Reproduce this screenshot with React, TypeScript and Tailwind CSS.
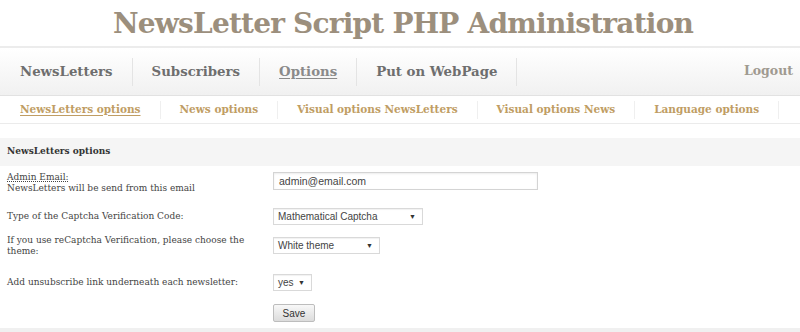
import React from "react";

const MAIN_NAV = ["NewsLetters", "Subscribers", "Options", "Put on WebPage"];
const SUB_NAV = [
  "NewsLetters options",
  "News options",
  "Visual options NewsLetters",
  "Visual options News",
  "Language options",
];

function FakeSelect({ value, width }: { value: string; width: string }) {
  return (
    <div
      className={`${width} h-[17px] flex items-center justify-between pl-[4px] pr-[6px] border border-[#d9d9d9] bg-white text-[10px] text-[#444] font-['Liberation_Sans',sans-serif] shadow-[inset_0_1px_1px_rgba(0,0,0,0.06)]`}
    >
      <span>{value}</span>
      <span className="text-[7px] text-[#333]">▼</span>
    </div>
  );
}

export default function App() {
  return (
    <div className="w-[800px] h-[332px] overflow-hidden bg-white font-['DejaVu_Serif',serif]">
      {/* Title */}
      <h1 className="h-[46px] flex items-center justify-center pl-[6px] text-[28px] font-bold text-[#9c8f7d] tracking-[-0.8px] pt-[1px]">
        NewsLetter Script PHP Administration
      </h1>

      {/* Main nav */}
      <div className="h-[50px] border-t-2 border-b border-t-[#ececec] border-b-[#e2e2e2] bg-gradient-to-b from-white to-[#f1f1f1] flex items-center pl-[20px] pr-[7px] whitespace-nowrap">
        {MAIN_NAV.map((item) => (
          <React.Fragment key={item}>
            <span
              className={`text-[13.3px] font-bold ${
                item === "Options"
                  ? "underline underline-offset-2 decoration-1 text-[#8a8a8a]"
                  : "text-[#6e6e6e]"
              }`}
            >
              {item}
            </span>
            <span className="w-px h-[28px] bg-[#e4e4e4] mx-[19px]" />
          </React.Fragment>
        ))}
        <span className="ml-auto text-[12.5px] font-bold text-[#a09a90]">Logout</span>
      </div>

      {/* Sub nav */}
      <div className="h-[28px] border-b border-[#ebebeb] flex items-center pl-[20px] whitespace-nowrap">
        {SUB_NAV.map((item, i) => (
          <React.Fragment key={item}>
            <span
              className={`text-[10.5px] font-bold text-[#c09d63] ${
                i === 0 ? "underline underline-offset-2 decoration-1" : ""
              }`}
            >
              {item}
            </span>
            <span className="w-px h-[18px] bg-[#efefef] mx-[19px] shrink-0" />
          </React.Fragment>
        ))}
      </div>

      {/* Section header */}
      <div className="mt-[14px] h-[28px] bg-[#f5f5f5] flex items-center px-[7px] text-[9px] font-bold text-[#333]">
        NewsLetters options
      </div>

      {/* Form */}
      <div className="pl-[7px] text-[9px] text-[#444] leading-[11px]">
        <div className="flex items-start pt-[6px] h-[36px]">
          <div className="w-[266px]">
            <div className="underline decoration-dotted">Admin Email:</div>
            <div>NewsLetters will be send from this email</div>
          </div>
          <div className="w-[265px] h-[18px] flex items-center px-[5px] border border-[#d4d4d4] bg-white text-[10.5px] text-[#444] font-['Liberation_Sans',sans-serif] shadow-[inset_0_1px_2px_rgba(0,0,0,0.08)]">
            admin@email.com
          </div>
        </div>

        <div className="flex items-center h-[28px]">
          <div className="w-[266px]">Type of the Captcha Verification Code:</div>
          <FakeSelect value="Mathematical Captcha" width="w-[150px]" />
        </div>

        <div className="flex items-center h-[31px]">
          <div className="w-[266px] pr-[16px]">
            If you use reCaptcha Verification, please choose the theme:
          </div>
          <FakeSelect value="White theme" width="w-[107px]" />
        </div>

        <div className="flex items-center h-[43px]">
          <div className="w-[266px]">Add unsubscribe link underneath each newsletter:</div>
          <FakeSelect value="yes" width="w-[39px]" />
        </div>

        <div className="flex h-[24px] items-start">
          <div className="w-[266px]" />
          <button className="w-[42px] h-[18px] border border-[#bdbdbd] rounded-[2px] bg-gradient-to-b from-[#f8f8f8] to-[#dcdcdc] text-[10px] text-[#333] font-['Liberation_Sans',sans-serif]">
            Save
          </button>
        </div>
      </div>

      <div className="h-[4px] bg-[#f0f0f0]" />
    </div>
  );
}
